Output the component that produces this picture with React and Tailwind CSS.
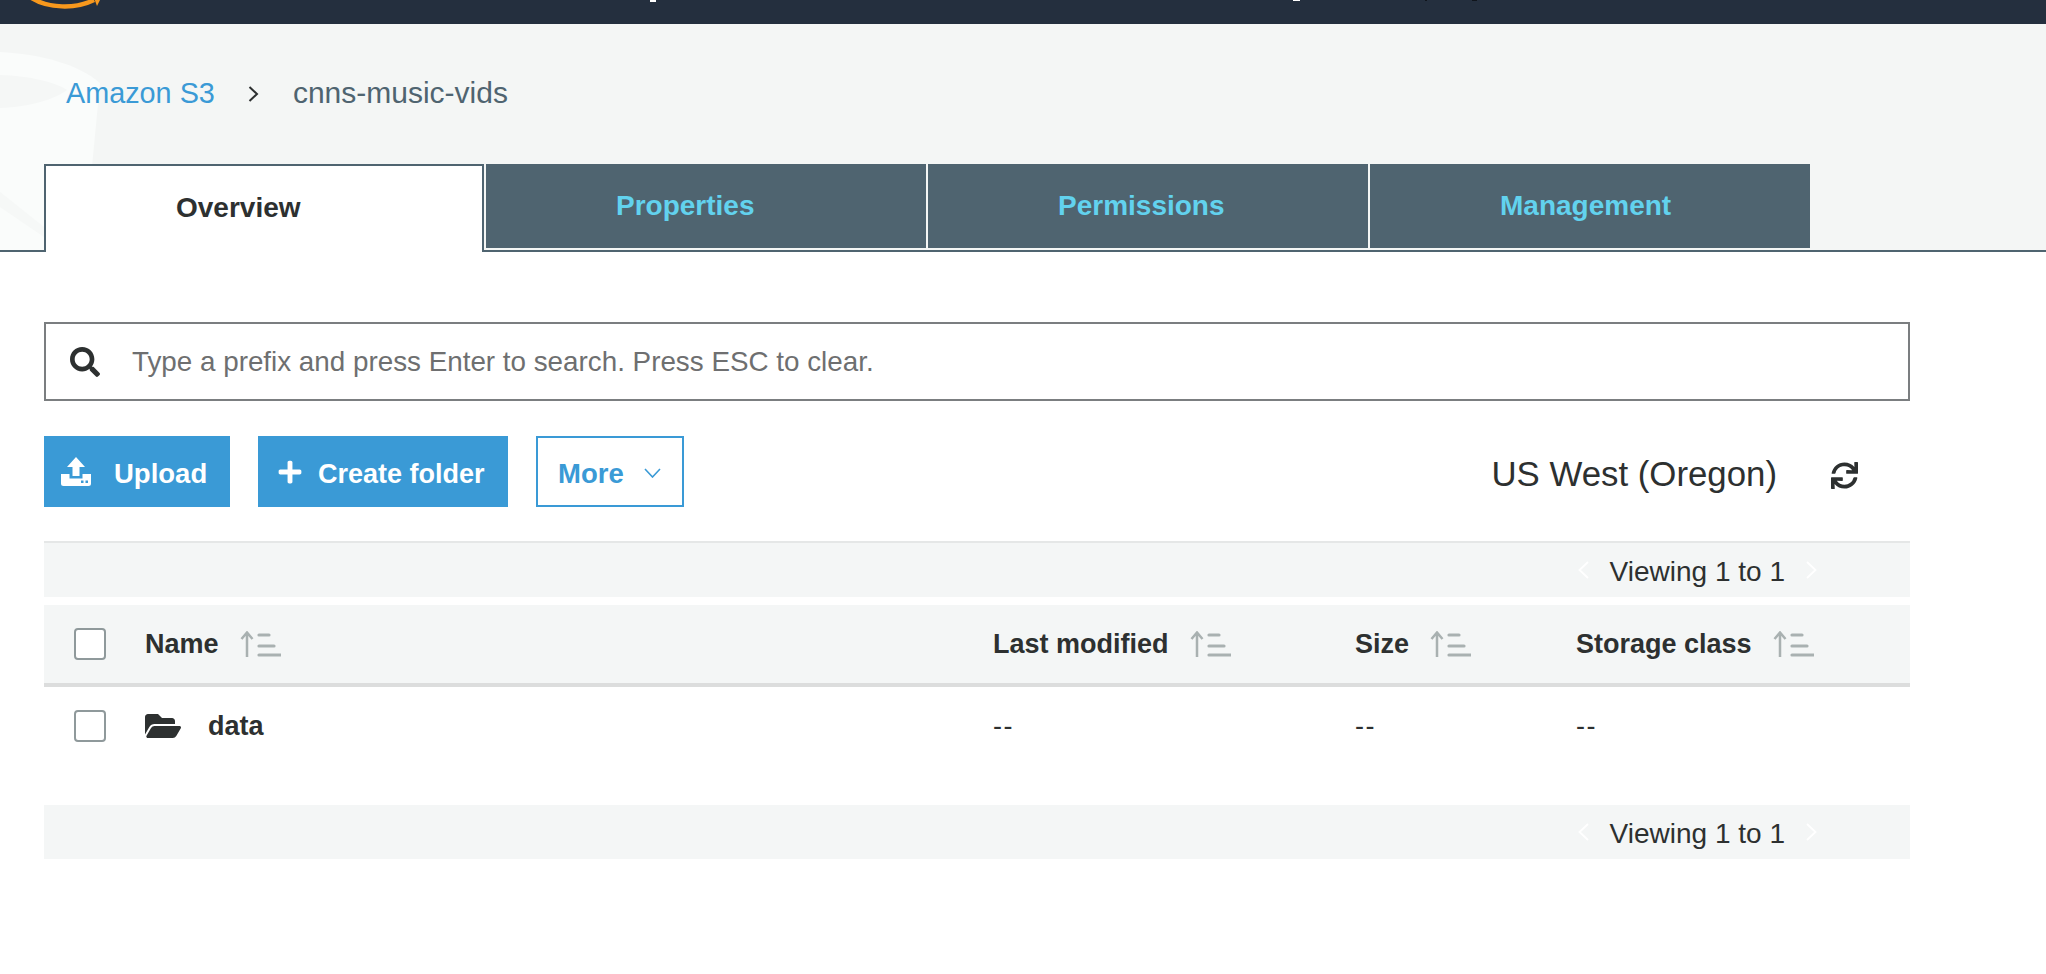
import { FaFolderOpen, FaPlus, FaSearch, FaSync } from "react-icons/fa";

const columns = [
  { label: "Name" },
  { label: "Last modified" },
  { label: "Size" },
  { label: "Storage class" },
];

const gridCols = "grid grid-cols-[101px_848px_362px_221px_1fr] items-center";

function SortIcon() {
  return (
    <svg className="h-[26px] w-[41px] shrink-0 text-[#a9b1b1]" viewBox="0 0 41 26" fill="none" stroke="currentColor">
      <path d="M7 26V2M1.5 8 7 1.5 12.500 8" strokeWidth="2.500" />
      <path d="M19 4h10M19 15h15M19 24h22" strokeWidth="3.200" strokeLinecap="round" />
    </svg>
  );
}

function UploadIcon() {
  return (
    <svg className="h-[29px] w-[30px]" viewBox="0 0 30 29" fill="white">
      <path d="M15 0 24 10H18.500V19H11.500V10H6Z" />
      <path d="M0 17H8.500V21.500H21.500V17H30V26.500A2.500 2.500 0 0 1 27.500 29H2.500A2.500 2.500 0 0 1 0 26.500Z" />
      <rect x="20" y="23.500" width="2.500" height="2.500" fill="#3a9ad6" />
      <rect x="24.500" y="23.500" width="2.500" height="2.500" fill="#3a9ad6" />
    </svg>
  );
}

function Chevron({ left }) {
  return (
    <svg className="h-[18px] w-[11px]" viewBox="0 0 11 18" fill="none" stroke="white" strokeWidth="1.800">
      <path d={left ? "M10 1 1.500 9 10 17" : "M1 1 9.500 9 1 17"} />
    </svg>
  );
}

function Pager({ className }) {
  return (
    <div className={`flex items-center justify-end gap-[21px] bg-[#f4f6f6] pr-[93px] text-[#2d3030] ${className}`}>
      <Chevron left />
      <span className="pt-[3px] text-[28px]">Viewing 1 to 1</span>
      <Chevron />
    </div>
  );
}

function Checkbox() {
  return <span className="ml-[30px] block h-[32px] w-[32px] rounded-[4px] border-2 border-[#8f999b] bg-white" />;
}

function Tab({ children }) {
  return (
    <button className="h-[84px] w-[440px] bg-[#4f6470] pl-[130px] text-left text-[28px] font-bold text-[#62d2ee]" type="button">
      {children}
    </button>
  );
}

export default function App() {
  return (
    <div className="min-h-[974px] overflow-hidden bg-white font-['Liberation_Sans',Arial,sans-serif] text-[#2d3030]">
      <header className="relative h-[24px] overflow-hidden bg-[#242f3e]">
        <svg className="absolute left-[28px] top-0 h-[10px] w-[76px]" viewBox="0 0 76 10" fill="none">
          <path d="M2 -3C20 9 48 9 66 0" stroke="#f7981d" strokeWidth="4.500" />
          <path d="M66 -2 73 -2 69 6Z" fill="#f7981d" />
        </svg>
        {/* bottoms of the nav labels, cropped by the top edge of the screenshot */}
        <span className="absolute left-[650px] top-0 h-[2px] w-[6px] bg-white" />
        <span className="absolute left-[1293px] top-0 h-[1px] w-[7px] bg-white" />
        <span className="absolute left-[1425px] top-0 h-[1px] w-[2px] bg-[#10151c]" />
        <span className="absolute left-[1472px] top-0 h-[1px] w-[5px] bg-[#10151c]" />
      </header>

      <section className="relative h-[228px] border-b-2 border-[#4f6470] bg-[#f4f6f5]">
        <svg className="absolute left-0 top-0 h-[226px] w-[110px]" viewBox="0 0 110 226">
          <path d="M0 28C40 30 78 40 100 59L84 226H0Z" fill="#fafcfb" />
          <path d="M0 51C30 52 55 58 67 66C55 75 30 83 0 84Z" fill="#f5f7f6" />
          <path d="M0 168 44 203V213L0 183Z" fill="#f6f8f7" />
        </svg>
        <nav className="relative flex h-[140px] items-center pl-[66px]">
          <a className="text-[28.800px] text-[#3a9ad6]" href="#">Amazon S3</a>
          <svg className="ml-[33px] h-[18px] w-[11px]" viewBox="0 0 11 18" fill="none" stroke="#2d3030" strokeWidth="2">
            <path d="M1.500 2 9 9 1.500 16" />
          </svg>
          <span className="ml-[34px] pb-[4px] text-[30px] text-[#4f6470]">cnns-music-vids</span>
        </nav>
        <div className="relative ml-[44px] flex h-[88px] items-start gap-[2px]">
          <div className="-mb-[2px] flex h-[88px] w-[440px] items-center border-x-[2.500px] border-t-[2.500px] border-[#4f6470] bg-white pb-[3px] pl-[130px] text-[28px] font-bold">
            Overview
          </div>
          <Tab>Properties</Tab>
          <Tab>Permissions</Tab>
          <Tab>Management</Tab>
        </div>
      </section>

      <main className="ml-[44px] mr-[136px] pt-[70px]">
        <div className="flex h-[79px] items-center border-2 border-[#7b7e80] pl-[24px]">
          <FaSearch className="h-[30px] w-[30px] text-[#2d3030]" />
          <span className="ml-[32px] text-[27.800px] text-[#6e6f70]">Type a prefix and press Enter to search. Press ESC to clear.</span>
        </div>

        <div className="mt-[35px] flex h-[71px] items-center">
          <button className="flex h-full w-[186px] items-center bg-[#3a9ad6] pl-[17px] text-[27.500px] font-bold text-white" type="button">
            <UploadIcon />
            <span className="ml-[23px] pt-[5px]">Upload</span>
          </button>
          <button className="ml-[28px] flex h-full w-[250px] items-center bg-[#3a9ad6] pl-[19px] text-[27px] font-bold text-white" type="button">
            <FaPlus className="h-[26px] w-[26px]" />
            <span className="ml-[15px] pt-[5px]">Create folder</span>
          </button>
          <button className="ml-[28px] flex h-full w-[148px] items-center border-2 border-[#3a9ad6] bg-white pl-[20px] text-[27.500px] font-bold text-[#3a9ad6]" type="button">
            <span className="pt-[5px]">More</span>
            <svg className="ml-[20px] mt-[3px] h-[10px] w-[17px]" viewBox="0 0 17 10" fill="none" stroke="#3a9ad6" strokeWidth="1.600">
              <path d="M1 1 8.500 9 16 1" />
            </svg>
          </button>
          <span className="ml-auto pt-[5px] text-[34.800px]">US West (Oregon)</span>
          <FaSync className="ml-[54px] mr-[52px] mt-[7px] h-[27px] w-[27px]" />
        </div>

        <Pager className="mt-[34px] h-[56px] border-t-2 border-[#e5e7e7]" />

        <div className={`${gridCols} mt-[8px] h-[82px] border-b-4 border-[#dcdddd] bg-[#f4f6f6] text-[27px] font-bold`}>
          <Checkbox />
          {columns.map((column) => (
            <div key={column.label} className="flex items-center gap-[21px]">
              {column.label}
              <SortIcon />
            </div>
          ))}
        </div>

        <div className={`${gridCols} h-[78px] text-[27px]`}>
          <Checkbox />
          <div className="flex items-center gap-[27px] font-bold">
            <FaFolderOpen className="h-[32px] w-[36px]" />
            data
          </div>
          <span className="tracking-[1.500px]">--</span>
          <span className="tracking-[1.500px]">--</span>
          <span className="tracking-[1.500px]">--</span>
        </div>

        <Pager className="mt-[40px] h-[54px]" />
      </main>
    </div>
  );
}
